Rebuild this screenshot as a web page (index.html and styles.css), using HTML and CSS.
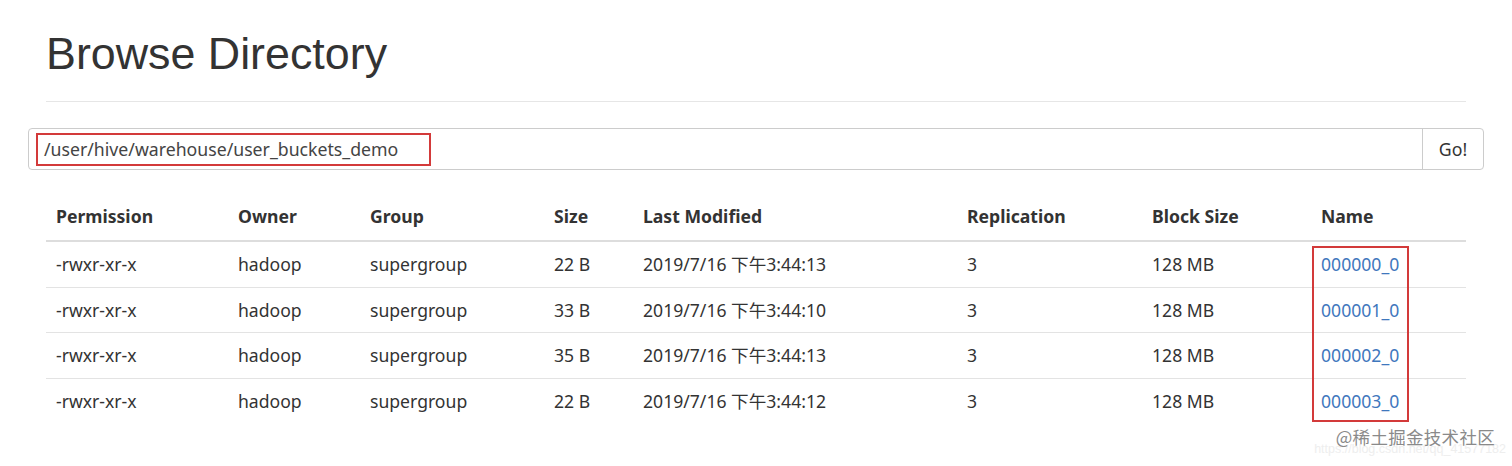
FILE: index.html
```html
<!DOCTYPE html>
<html lang="zh-CN">
<head>
<meta charset="utf-8">
<title>Browse Directory</title>
<link rel="stylesheet" href="styles.css">
</head>
<body>
<div class="page">
  <h1 class="title">Browse Directory</h1>
  <hr class="rule">
  <div class="input-group">
    <div class="path-field"><span class="path-mark">/user/hive/warehouse/user_buckets_demo</span></div>
    <div class="go-btn">Go!</div>
  </div>
  <div class="table-wrap">
    <table class="listing">
      <colgroup>
        <col class="c1"><col class="c2"><col class="c3"><col class="c4"><col class="c5"><col class="c6"><col class="c7"><col class="c8">
      </colgroup>
      <thead>
        <tr><th>Permission</th><th>Owner</th><th>Group</th><th>Size</th><th>Last Modified</th><th>Replication</th><th>Block Size</th><th>Name</th></tr>
      </thead>
      <tbody>
        <tr><td>-rwxr-xr-x</td><td>hadoop</td><td>supergroup</td><td>22 B</td><td>2019/7/16 下午3:44:13</td><td>3</td><td>128 MB</td><td><a class="file" href="#">000000_0</a></td></tr>
        <tr><td>-rwxr-xr-x</td><td>hadoop</td><td>supergroup</td><td>33 B</td><td>2019/7/16 下午3:44:10</td><td>3</td><td>128 MB</td><td><a class="file" href="#">000001_0</a></td></tr>
        <tr><td>-rwxr-xr-x</td><td>hadoop</td><td>supergroup</td><td>35 B</td><td>2019/7/16 下午3:44:13</td><td>3</td><td>128 MB</td><td><a class="file" href="#">000002_0</a></td></tr>
        <tr><td>-rwxr-xr-x</td><td>hadoop</td><td>supergroup</td><td>22 B</td><td>2019/7/16 下午3:44:12</td><td>3</td><td>128 MB</td><td><a class="file" href="#">000003_0</a></td></tr>
      </tbody>
    </table>
    <div class="name-mark"></div>
  </div>
</div>
<div class="watermark">
  <span class="wm-url">https://blog.csdn.net/qq_41577182</span>
  <span class="wm-main">@稀土掘金技术社区</span>
</div>
</body>
</html>
```

FILE: styles.css
```css
html, body {
  margin: 0;
  padding: 0;
  background: #fff;
}
body {
  width: 1512px;
  height: 466px;
  overflow: hidden;
  position: relative;
  font-family: "Noto Sans", "Noto Sans CJK SC", sans-serif;
  color: #333;
}
.page {
  padding: 0 46px;
}
.title {
  font-family: "Liberation Sans", Arial, sans-serif;
  font-weight: 400;
  font-size: 44.8px;
  line-height: 48px;
  margin: 29px 0 0 0;
  color: #333;
}
.rule {
  border: 0;
  border-top: 1px solid #e6e6e6;
  margin: 24px 0 0 0;
  height: 0;
}
.input-group {
  display: flex;
  margin: 26px -18px 0 -18px;
  border: 1px solid #ccc;
  border-radius: 4px;
  box-sizing: border-box;
  height: 42px;
}
.path-field {
  flex: 1;
  display: flex;
  align-items: center;
  padding-left: 7px;
}
.path-mark {
  display: inline-block;
  border: 2px solid #d33a3a;
  height: 33px;
  box-sizing: border-box;
  width: 395px;
  padding-left: 6px;
  font-size: 17.7px;
  line-height: 29px;
  color: #444;
}
.go-btn {
  width: 60px;
  border-left: 1px solid #ccc;
  display: flex;
  align-items: center;
  justify-content: center;
  font-size: 17.7px;
  color: #333;
}
.table-wrap {
  position: relative;
  margin-top: 24px;
}
.listing {
  width: 1420px;
  border-collapse: collapse;
  table-layout: fixed;
  font-size: 17.6px;
}
.c1 { width: 182px; }
.c2 { width: 132px; }
.c3 { width: 184px; }
.c4 { width: 89px; }
.c5 { width: 324px; }
.c6 { width: 185px; }
.c7 { width: 169px; }
.c8 { width: 155px; }
.listing th {
  text-align: left;
  font-weight: 700;
  padding: 10px 10px 11px 10px;
  line-height: 25px;
  border-bottom: 2px solid #ddd;
}
.listing td {
  padding: 10px 10px;
  line-height: 24.5px;
  border-top: 1px solid #e3e3e3;
  white-space: nowrap;
}
.listing tbody tr:first-child td {
  border-top: 0;
}
.file {
  color: #3f77bd;
  text-decoration: none;
}
.name-mark {
  position: absolute;
  left: 1266px;
  top: 52px;
  width: 97px;
  height: 176px;
  border: 2px solid #d33a3a;
  box-sizing: border-box;
}
.watermark {
  position: absolute;
  right: 6px;
  bottom: 8px;
  width: 210px;
  height: 36px;
}
.wm-url {
  position: absolute;
  right: 0;
  bottom: 2px;
  font-family: "Liberation Sans", Arial, sans-serif;
  font-size: 12.5px;
  color: #eeeeee;
  white-space: nowrap;
}
.wm-main {
  position: absolute;
  right: 11px;
  top: 4px;
  font-family: "Noto Sans CJK SC", sans-serif;
  font-size: 17.5px;
  line-height: 22px;
  color: #8a8a8a;
  white-space: nowrap;
  letter-spacing: 0.3px;
}
```
